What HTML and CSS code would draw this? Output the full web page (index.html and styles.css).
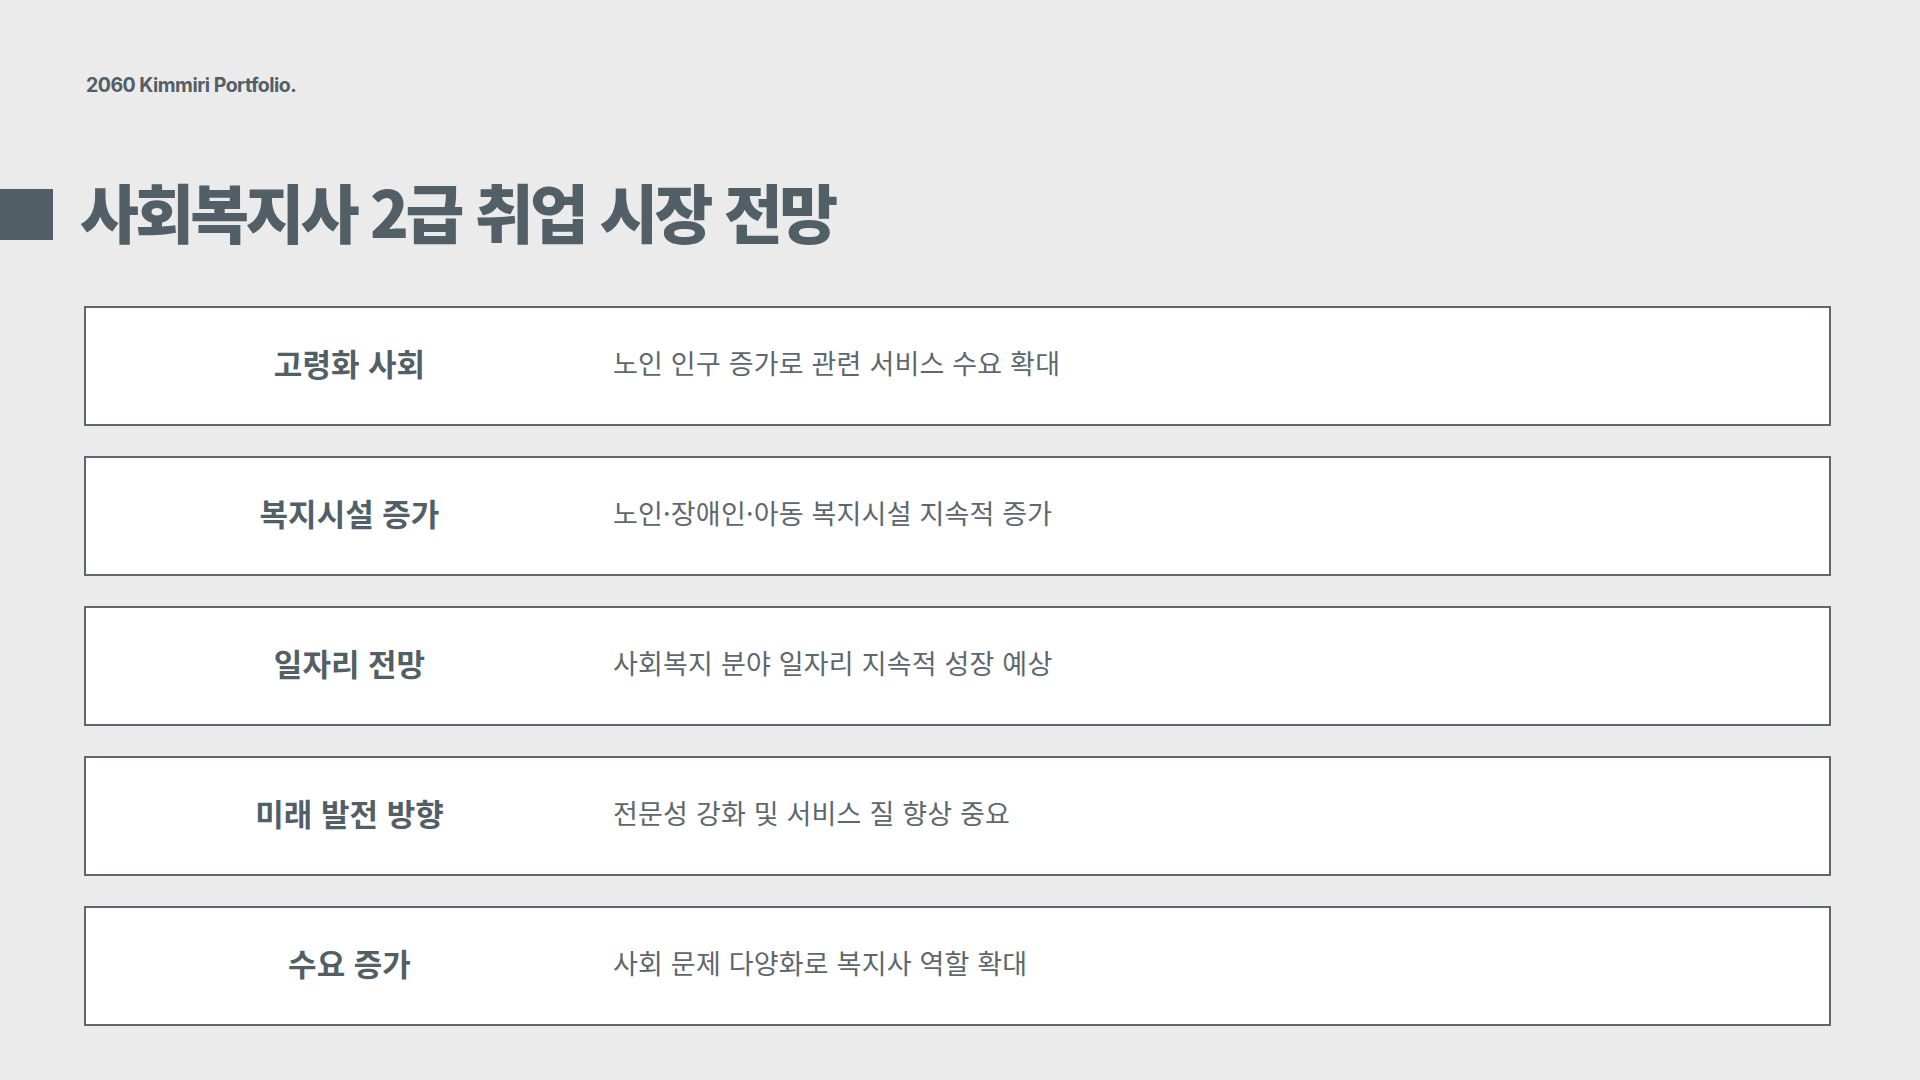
FILE: index.html
```html
<!DOCTYPE html>
<html lang="ko">
<head>
<meta charset="utf-8">
<title>사회복지사 2급 취업 시장 전망</title>
<link rel="stylesheet" href="styles.css">
</head>
<body>
<div class="page">
  <header class="brand">2060 Kimmiri Portfolio.</header>
  <div class="title-row">
    <span class="title-mark"></span>
    <h1 class="title">사회복지사 2급 취업 시장 전망</h1>
  </div>
  <ul class="rows">
    <li class="row"><div class="label">고령화 사회</div><div class="desc">노인 인구 증가로 관련 서비스 수요 확대</div></li>
    <li class="row"><div class="label">복지시설 증가</div><div class="desc">노인·장애인·아동 복지시설 지속적 증가</div></li>
    <li class="row"><div class="label">일자리 전망</div><div class="desc">사회복지 분야 일자리 지속적 성장 예상</div></li>
    <li class="row"><div class="label">미래 발전 방향</div><div class="desc">전문성 강화 및 서비스 질 향상 중요</div></li>
    <li class="row"><div class="label">수요 증가</div><div class="desc">사회 문제 다양화로 복지사 역할 확대</div></li>
  </ul>
</div>
</body>
</html>
```
FILE: styles.css
```css
* { box-sizing: border-box; }
html, body {
  margin: 0;
  padding: 0;
  background: #ebebeb;
  width: 1920px;
  height: 1080px;
  overflow: hidden;
}
body {
  font-family: Inter, "Noto Sans CJK KR", sans-serif;
  color: #525f66;
}
.page {
  display: flex;
  flex-direction: column;
}
.brand {
  padding: 74px 0 0 86px;
  font-family: Inter, sans-serif;
  font-weight: 700;
  font-size: 19.5px;
  line-height: 22px;
  letter-spacing: -0.5px;
  height: 96px;
}
.title-row {
  display: flex;
  align-items: center;
  gap: 27px;
  margin-top: 93px;
  height: 51px;
}
.title-mark {
  width: 53px;
  height: 51px;
  background: #525f66;
  flex: none;
}
.title {
  margin: 0;
  padding-bottom: 10px;
  font-family: "Noto Sans CJK KR", sans-serif;
  font-weight: 900;
  font-size: 64px;
  line-height: 64px;
  letter-spacing: -3.7px;
  color: #525f66;
}
.rows {
  list-style: none;
  margin: 66px 89px 0 84px;
  padding: 0;
  display: flex;
  flex-direction: column;
  gap: 30px;
}
.row {
  height: 120px;
  padding-bottom: 8px;
  background: #fff;
  border: 2px solid #5d676c;
  display: flex;
  align-items: center;
}
.label {
  width: 527px;
  flex: none;
  text-align: center;
  font-family: "Noto Sans CJK KR", sans-serif;
  font-weight: 700;
  font-size: 31px;
  letter-spacing: 0;
  color: #525f66;
}
.desc {
  font-family: "Noto Sans CJK KR", sans-serif;
  font-weight: 400;
  font-size: 27px;
  letter-spacing: 0.2px;
  color: #5d676c;
}
```
